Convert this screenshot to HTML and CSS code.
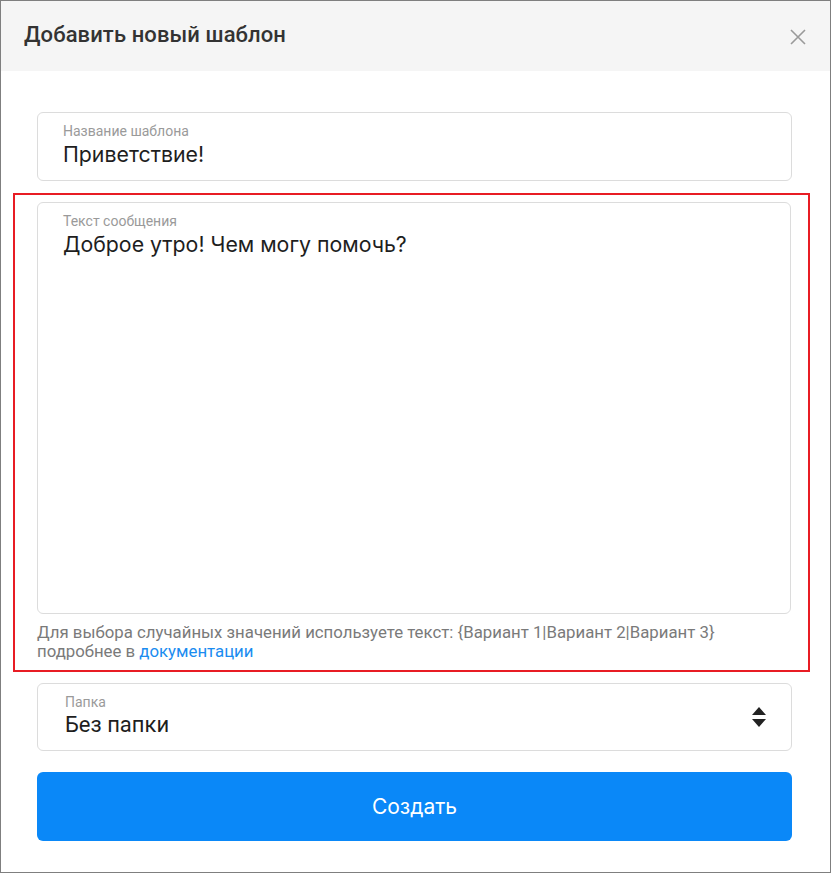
FILE: index.html
```html
<!DOCTYPE html>
<html lang="ru">
<head>
	<meta charset="UTF-8">
	<meta name="viewport" content="width=device-width, initial-scale=1.0">
	<title>Добавить новый шаблон</title>
	<link rel="stylesheet" href="styles.css">
</head>
<body>
	<div class="modal">
		<div class="modal-head">
			<h1 class="modal-title">Добавить новый шаблон</h1>
			<span class="modal-close">
				<svg width="16" height="16" viewBox="0 0 16 16"><path d="M1 1L15 15M15 1L1 15" stroke="#9a9a9a" stroke-width="1.6" fill="none"/></svg>
			</span>
		</div>
		<div class="modal-body">
			<div class="field">
				<div class="field-label">Название шаблона</div>
				<div class="field-value">Приветствие!</div>
			</div>

			<div class="highlight">
				<div class="field field-area">
					<div class="field-label">Текст сообщения</div>
					<div class="field-value">Доброе утро! Чем могу помочь?</div>
				</div>
				<p class="hint">Для выбора случайных значений используете текст: {Вариант 1|Вариант 2|Вариант 3}<br>подробнее в <a href="#">документации</a></p>
			</div>

			<div class="field field-select">
				<div>
					<div class="field-label">Папка</div>
					<div class="select-value">Без папки</div>
				</div>
				<svg class="select-arrows" width="14" height="20" viewBox="0 0 14 20"><path d="M7 0L14 8H0Z M0 12H14L7 20Z" fill="#222"/></svg>
			</div>

			<button class="btn">Создать</button>
		</div>
	</div>
</body>
</html>
```

FILE: styles.css
```css
* {
	padding: 0;
	margin: 0;
	box-sizing: border-box;
}
html, body {
	background: #fff;
}
body {
	font-family: Roboto, "Noto Sans", sans-serif;
	color: #222;
}

.modal {
	width: 831px;
	height: 873px;
	border: 1px solid #7f7f7f;
	background: #fff;
}
.modal-head {
	height: 70px;
	background: #f5f5f5;
	display: flex;
	align-items: center;
	justify-content: space-between;
	padding: 0 24px 3px 23px;
}
.modal-title {
	font-size: 22px;
	font-weight: 500;
	color: #333;
	letter-spacing: 0.1px;
}
.modal-close {
	display: flex;
	margin-top: 5px;
}

.modal-body {
	padding: 41px 38px 0 36px;
}

.field {
	border: 1px solid #dcdcdc;
	border-radius: 6px;
	height: 69px;
	padding: 10px 25px 0;
}
.field-label {
	font-size: 14px;
	color: #9a9a9a;
	line-height: 16px;
}
.field-value {
	font-family: Inter, Roboto, sans-serif;
	font-size: 21.3px;
	line-height: 30px;
	color: #1e1e1e;
}

.highlight {
	margin: 12px -18px 0 -24px;
	border: 2px solid #e81c24;
	padding: 7px 17px 9px 22px;
}
.field-area {
	height: 412px;
}
.hint {
	font-size: 16.8px;
	line-height: 19px;
	color: #7a7a7a;
	margin-top: 9px;
}
.hint a {
	color: #1a8cf0;
	text-decoration: none;
}

.field-select {
	margin-top: 11px;
	height: 68px;
	padding: 10px 25px 0 27px;
	display: flex;
	justify-content: space-between;
	align-items: flex-start;
}
.select-value {
	font-size: 22px;
	line-height: 30px;
	color: #1e1e1e;
}
.select-arrows {
	margin-top: 13px;
}

.btn {
	display: block;
	width: 100%;
	height: 69px;
	margin-top: 21px;
	border: none;
	border-radius: 6px;
	background: #0a88f8;
	color: #fff;
	font-family: Inter, Roboto, sans-serif;
	font-size: 21px;
}
```
